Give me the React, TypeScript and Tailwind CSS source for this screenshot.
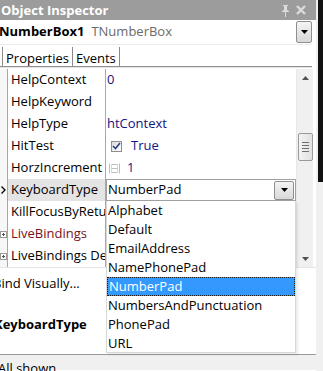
import { useState } from "react"

const font = { fontFamily: '"Open Sans", "Noto Sans", sans-serif' }

type Row = { name: string; value?: string; kind?: "text" | "check" | "spin" | "combo"; color?: string; expand?: boolean }

const rows: Row[] = [
  { name: "HelpContext", value: "0" },
  { name: "HelpKeyword" },
  { name: "HelpType", value: "htContext" },
  { name: "HitTest", value: "True", kind: "check" },
  { name: "HorzIncrement", value: "1", kind: "spin" },
  { name: "KeyboardType", value: "NumberPad", kind: "combo" },
  { name: "KillFocusByReturn" },
  { name: "LiveBindings", color: "text-[#7a1020]", expand: true },
  { name: "LiveBindings Designer", expand: true },
]

const options = [
  "Alphabet",
  "Default",
  "EmailAddress",
  "NamePhonePad",
  "NumberPad",
  "NumbersAndPunctuation",
  "PhonePad",
  "URL",
]

function DownTri() {
  return (
    <svg width="7" height="4" viewBox="0 0 7 4">
      <path d="M0 0h7L3.5 4z" fill="#000" />
    </svg>
  )
}

function DropBtn({ className }: { className: string }) {
  return (
    <div
      className={`${className} flex items-center justify-center rounded-[2px] border border-[#8f8f8f] bg-gradient-to-b from-[#f4f4f4] to-[#d8d8d8]`}
    >
      <DownTri />
    </div>
  )
}

function ExpandBox() {
  return (
    <svg width="7" height="7" viewBox="0 0 7 7">
      <rect x="0.5" y="0.5" width="6" height="6" fill="#fff" stroke="#9a9a9a" />
      <path d="M2 3.5h3M3.5 2v3" stroke="#555" />
    </svg>
  )
}

export default function App() {
  const [selected] = useState("NumberPad")

  return (
    <div className="relative flex h-[371px] w-[323px] overflow-hidden bg-[#f0f0f0] text-[13px] text-black" style={font}>
      <div className="relative flex w-[316px] flex-col bg-white">
        {/* title bar */}
        <div className="flex h-[20px] items-center justify-between bg-[#9c9c9c] pl-[1px] pr-[10px]">
          <span className="text-[13px] font-bold leading-none text-white">Object Inspector</span>
          <div className="flex items-center gap-[6px]">
            <svg width="9" height="13" viewBox="0 0 9 13">
              <path d="M2 1h5v1H6v4l2 1v1H1V7l2-1V2H2z" fill="#dcdcdc" />
              <path d="M4 8h1v5H4z" fill="#dcdcdc" />
            </svg>
            <svg width="10" height="10" viewBox="0 0 10 10">
              <path d="M1 1l8 8M9 1L1 9" stroke="#dcdcdc" strokeWidth="2.4" />
            </svg>
          </div>
        </div>

        {/* component selector */}
        <div className="flex h-[24px] items-center">
          <span className="ml-[-1px] text-[13px] font-bold">NumberBox1</span>
          <span className="ml-[7px] text-[#6a6a6a]">TNumberBox</span>
          <DropBtn className="ml-auto mr-[4px] h-[22px] w-[16px]" />
        </div>

        {/* tabs */}
        <div className="mr-[4px] flex h-[22px] items-end border-t border-[#ececec]">
          <div className="ml-[2px] flex h-[19px] items-center border-l border-r border-[#8a8a8a] px-[3px] pt-[3px] leading-none">Properties</div>
          <div className="flex h-[19px] items-center border-r border-[#8a8a8a] px-[3px] pt-[3px] leading-none">Events</div>
        </div>
        <div className="mr-[4px] h-[1px] bg-[#8f8f8f]" />
        <div className="mr-[4px] h-[1px] bg-[#e4e4e4]" />

        {/* grid */}
        <div className="mt-[1px] flex h-[198px]">
          <div className="flex w-[296px] flex-col">
            {rows.map((r) => (
              <div key={r.name} className="flex h-[22px] items-center">
                <div className="flex h-full w-[8px] items-center justify-center border-r border-[#a8a8a8] bg-[#f7f7f7]">
                  {r.kind === "combo" && (
                    <svg width="5" height="8" viewBox="0 0 5 8">
                      <path d="M0.5 0.5l3.5 3.5-3.5 3.5" stroke="#000" strokeWidth="1.3" fill="none" />
                    </svg>
                  )}
                  {r.expand && <ExpandBox />}
                </div>
                <div
                  className={`flex h-full w-[98px] items-center overflow-hidden whitespace-nowrap border-r border-[#a8a8a8] pl-[3px] ${
                    r.kind === "combo" ? "bg-[#e4e4e4]" : ""
                  } ${r.color ?? ""}`}
                >
                  {r.name}
                </div>
                <div className="flex h-full flex-1 items-center whitespace-nowrap pl-[1px] text-[#141480]">
                  {r.kind === "check" && (
                    <>
                      <span className="ml-[4px] mr-[9px] flex h-[11px] w-[11px] items-center justify-center border border-[#8e8f8f] bg-gradient-to-br from-[#dcdcdc] to-[#ffffff]">
                        <svg width="9" height="8" viewBox="0 0 9 8">
                          <path d="M1 4l2.5 2.5L8 1" stroke="#2a3f8a" strokeWidth="1.6" fill="none" />
                        </svg>
                      </span>
                      {r.value}
                    </>
                  )}
                  {r.kind === "spin" && (
                    <>
                      <svg className="ml-[2px] mr-[7px]" width="11" height="11" viewBox="0 0 11 11">
                        <path d="M0.5 0.5v10M10.5 0.5v10M2.5 1.5h6M2.5 9.5h6M2.5 5.5h6" stroke="#bdbdbd" />
                        <path d="M2.5 1.5v8M8.5 1.5v8" stroke="#d6d6d6" />
                      </svg>
                      {r.value}
                    </>
                  )}
                  {r.kind === "combo" && (
                    <div className="ml-[-1px] flex h-[22px] flex-1 items-center border border-[#a0a0a0] bg-white pl-[1px] text-black">
                      <span>{r.value}</span>
                      <DropBtn className="ml-auto mr-[1px] h-[19px] w-[20px]" />
                    </div>
                  )}
                  {!r.kind && r.value}
                </div>
              </div>
            ))}
          </div>

          {/* scrollbar */}
          <div className="flex w-[17px] flex-col items-center border-l border-[#e8e8e8] bg-[#f0f0f0]">
            <div className="flex h-[17px] items-center justify-center">
              <svg width="7" height="4" viewBox="0 0 7 4">
                <path d="M0 4h7L3.5 0z" fill="#505050" />
              </svg>
            </div>
            <div className="mt-[47px] flex h-[28px] w-[15px] flex-col items-center justify-center gap-[2px] rounded-[2px] border border-[#9a9a9a] bg-gradient-to-r from-[#f4f4f4] to-[#e0e0e0]">
              <div className="h-[1px] w-[7px] bg-[#707070]" />
              <div className="h-[1px] w-[7px] bg-[#707070]" />
              <div className="h-[1px] w-[7px] bg-[#707070]" />
              <div className="h-[1px] w-[7px] bg-[#707070]" />
            </div>
            <div className="mt-auto flex h-[17px] items-center justify-center">
              <svg width="7" height="4" viewBox="0 0 7 4">
                <path d="M0 0h7L3.5 4z" fill="#505050" />
              </svg>
            </div>
          </div>
        </div>

        {/* description panel */}
        <div className="flex h-[87px] flex-col border-t border-[#e6e6e6]">
          <div className="flex w-[106px] flex-1 flex-col bg-white">
            <span className="ml-[-7px] mt-[6px] whitespace-nowrap">Bind Visually...</span>
            <span className="ml-[-6px] mt-[21px] whitespace-nowrap font-bold">KeyboardType</span>
          </div>
        </div>

        {/* status bar */}
        <div className="flex h-[16px] items-start border-t border-[#9a9a9a] bg-[#f0f0f0] pt-[5px]">
          <span className="ml-[-2px] leading-[16px]">All shown</span>
        </div>

        {/* dropdown list */}
        <div className="absolute left-[106px] top-[201px] flex h-[152px] w-[190px] flex-col border-x border-b border-[#d8d8d8] bg-white shadow-[2px_2px_2px_rgba(0,0,0,0.08)]">
          {options.map((o) => (
            <div
              key={o}
              className={`flex h-[19px] shrink-0 items-center pl-[1px] ${
                o === selected ? "border border-dotted border-[#1a1a1a] bg-[#3399ff] pl-0 text-white" : ""
              }`}
            >
              {o}
            </div>
          ))}
        </div>
      </div>

      {/* right edge of window behind */}
      <div className="ml-[2px] flex w-[5px] flex-col">
        <div className="h-[182px] bg-[#111111]" />
      </div>
    </div>
  )
}
